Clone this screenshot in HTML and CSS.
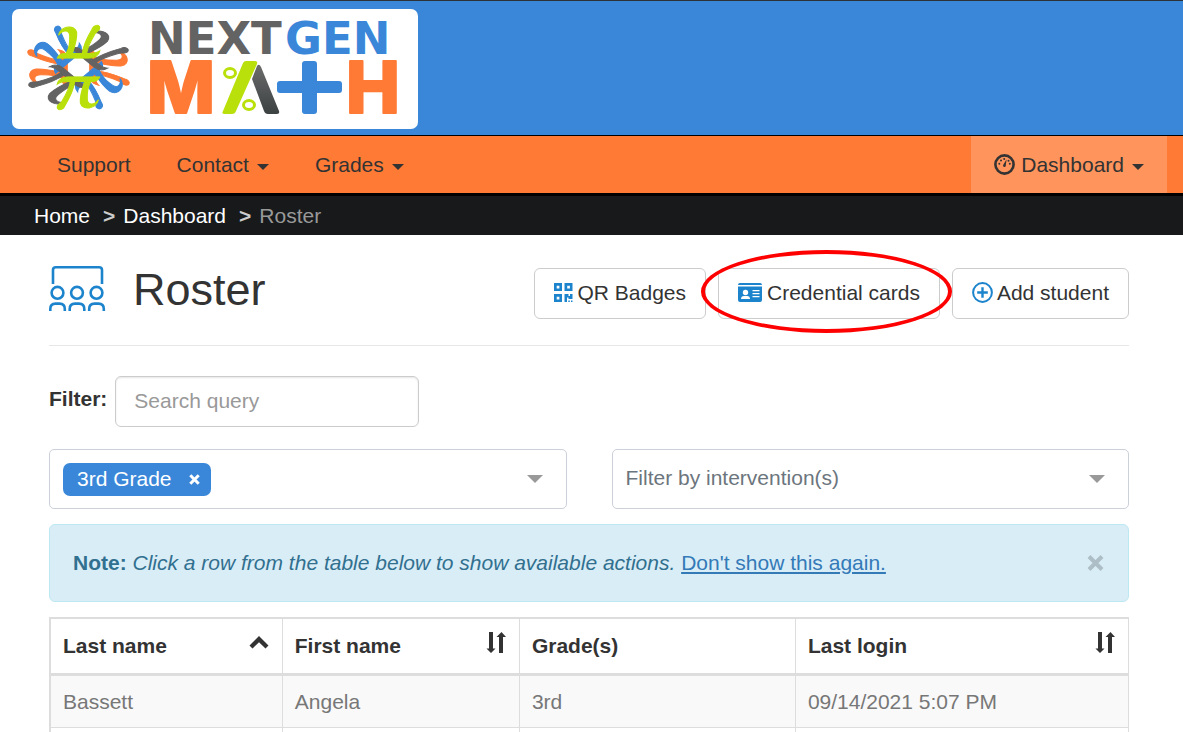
FILE: index.html
```html
<!DOCTYPE html>
<html lang="en">
<head>
	<meta charset="UTF-8">
	<title>Roster</title>
	<link rel="stylesheet" href="styles.css">
</head>
<body>
	<header class="header">
		<a href="#" class="logo">
			<svg width="406" height="120" viewBox="12 9 406 120" role="img" aria-label="NextGen Math">
				<defs>
					<g id="pi" fill="currentColor" stroke="currentColor" stroke-width="0.9">
						<path d="M-17 16C-16 11-12 9-8 9H17C16 12 14 13.5 11 13.5H-8C-12 13.5-15 14-17 16Z"/>
						<path d="M-6.5 13H-3C-4 23-8 31-11 37C-12 41-17 42-17 38C-17 35-14 35-13 32C-10 26-7 20-6.5 13Z"/>
						<path d="M5 13H10C7 20 7 24 7 30C7 36 12 37 16 31C14 40 3 42 1.5 34C1 28 3 20 5 13Z"/>
					</g>
				</defs>
				<g transform="translate(78.5 67.5) scale(1.25 1.04)">
					<use href="#pi" color="#ff7a35" transform="rotate(90)"/>
					<use href="#pi" color="#ff7a35" transform="rotate(-90)"/>
					<use href="#pi" color="#3a87d9" transform="rotate(135)"/>
					<use href="#pi" color="#3a87d9" transform="rotate(-45)"/>
					<use href="#pi" color="#636363" transform="rotate(45)"/>
					<use href="#pi" color="#636363" transform="rotate(225)"/>
					<use href="#pi" color="#b9e00b" transform="rotate(180)"/>
					<use href="#pi" color="#b9e00b"/>
				</g>
				<text class="logo-next" x="148" y="54">NEXT</text>
				<text class="logo-gen" x="285" y="54">GEN</text>
				<text class="logo-math" x="147" y="113">M</text>
				<defs>
					<linearGradient id="leg" x1="0" y1="0" x2="0" y2="1">
						<stop offset="0" stop-color="#6b6b6b"/>
						<stop offset="1" stop-color="#3c4142"/>
					</linearGradient>
				</defs>
				<path d="M252 79L257 66Q259 63 261 67L279 111Q280 114 277 114H268Q265 114 264 111Z" fill="url(#leg)"/>
				<path d="M246 61H255Q258 61 257 64L236 111Q235 114 232 114H225Q221 114 223 111L243 63Q244 61 246 61Z" fill="#b9e00b"/>
				<g fill="none" stroke="#b9e00b" stroke-width="3">
					<ellipse cx="230" cy="73" rx="5.5" ry="4.5"/>
					<ellipse cx="249" cy="105" rx="5.5" ry="4.5"/>
				</g>
				<path d="M305 61H314Q317 61 317 64V81H339Q342 81 342 84V90Q342 93 339 93H317V111Q317 114 314 114H305Q302 114 302 111V93H280Q277 93 277 90V84Q277 81 280 81H302V64Q302 61 305 61Z" fill="#3a87d9"/>
				<text class="logo-math" x="346" y="113">H</text>
			</svg>
		</a>
	</header>

	<nav class="navbar">
		<a href="#">Support</a>
		<a href="#">Contact <span class="caret"></span></a>
		<a href="#">Grades <span class="caret"></span></a>
		<a href="#" class="active">
			<svg class="icon-dash" width="21" height="21" viewBox="0 0 21 21">
				<circle cx="10.5" cy="10.5" r="9.1" fill="none" stroke="#333" stroke-width="2.6"/>
				<path d="M9.3 10.8L12.6 5.2L11.8 11.2A1.4 1.4 0 1 1 9.3 10.8Z"/>
				<circle cx="5.3" cy="9.8" r="1"/>
				<circle cx="7" cy="6.6" r="1"/>
				<circle cx="10.2" cy="5" r="1"/>
				<circle cx="14.5" cy="6.8" r="1"/>
				<circle cx="15.8" cy="9.8" r="1"/>
			</svg>
			Dashboard <span class="caret"></span>
		</a>
	</nav>

	<ol class="breadcrumb">
		<li><a href="#">Home</a></li>
		<li><a href="#">Dashboard</a></li>
		<li class="current">Roster</li>
	</ol>

	<main class="container">
		<div class="page-header">
			<svg width="57" height="46" viewBox="0 0 57 46" fill="none" stroke="#1c84cc" stroke-width="2.6">
				<path d="M4 18V4Q4 1.3 6.8 1.3H50Q53 1.3 53 4V18"/>
				<circle cx="8.5" cy="26.8" r="5.9"/>
				<circle cx="28" cy="26.8" r="5.9"/>
				<circle cx="47.5" cy="26.8" r="5.9"/>
				<path d="M1.3 45V43Q1.3 37.6 6.5 37.6H10.5Q15.8 37.6 15.8 43V45M20.7 45V43Q20.7 37.6 26 37.6H30Q35.3 37.6 35.3 43V45M40.2 45V43Q40.2 37.6 45.5 37.6H49.5Q54.8 37.6 54.8 43V45"/>
			</svg>
			<h1>Roster</h1>
			<div class="actions">
				<button type="button" class="btn">
					<svg width="19" height="20" viewBox="0 0 19 20" fill="#1c84cc">
						<path fill-rule="evenodd" d="M0 0H8V8H0ZM2.7 2.7V5.5H5.4V2.7ZM10.5 0H18.5V8H10.5ZM13.2 2.7V5.5H15.9V2.7ZM0 11H8V19H0ZM2.7 13.7V16.5H5.4V13.7Z"/>
						<path d="M10.5 11H14.5V13H16V11H18.5V16H14.5V14.5H13V19H10.5ZM14.3 17.5H15.8V19H14.3ZM17 17.5H18.5V19H17Z"/>
					</svg>
					QR Badges
				</button>
				<div class="marked">
					<button type="button" class="btn">
						<svg width="25" height="20" viewBox="0 0 25 20">
							<path fill="#1c84cc" d="M2 0H22Q24 0 24 2H0Q0 0 2 0ZM0 3.5H24V17Q24 19 22 19H2Q0 19 0 17Z"/>
							<g fill="#fff">
								<circle cx="7.5" cy="9.5" r="2.7"/>
								<path d="M3 16Q3 13 6 13H9Q12 13 12 16Z"/>
								<path d="M14.5 7H21.5V8.2H14.5ZM14.5 10H21.5V11.2H14.5ZM14.5 13H21.5V14.2H14.5Z"/>
							</g>
						</svg>
						Credential cards
					</button>
					<span class="ring"></span>
				</div>
				<button type="button" class="btn">
					<svg width="21" height="21" viewBox="0 0 21 21" fill="none" stroke="#1c84cc">
						<circle cx="10.5" cy="10.5" r="9.4" stroke-width="2"/>
						<path d="M10.5 5.2V15.8M5.2 10.5H15.8" stroke-width="2.4"/>
					</svg>
					Add student
				</button>
			</div>
		</div>

		<div class="search">
			<label for="query">Filter:</label>
			<input type="text" id="query" placeholder="Search query">
		</div>

		<div class="filters">
			<div class="select-box">
				<span class="tag">3rd Grade
					<button type="button" aria-label="Remove 3rd Grade">
						<svg width="11" height="11" viewBox="0 0 11 11" stroke="#fff" stroke-width="3"><path d="M1.3 1.3L9.7 9.7M9.7 1.3L1.3 9.7"/></svg>
					</button>
				</span>
				<button type="button" class="open" aria-label="Show grades"><span class="arrow"></span></button>
			</div>
			<div class="select-box">
				<select aria-label="Filter by intervention(s)">
					<option>Filter by intervention(s)</option>
				</select>
				<span class="arrow"></span>
			</div>
		</div>

		<div class="alert">
			<p><strong>Note:</strong> <em>Click a row from the table below to show available actions.</em> <a href="#">Don't show this again.</a></p>
			<button type="button" aria-label="Close">
				<svg width="17" height="16" viewBox="0 0 17 16" stroke="#adbec6" stroke-width="4"><path d="M2 1.5L15 14.5M15 1.5L2 14.5"/></svg>
			</button>
		</div>

		<table class="roster">
			<thead>
				<tr>
					<th class="col-last"><div>Last name
						<button type="button" aria-label="Sort by last name"><svg width="20" height="22" viewBox="0 0 20 22"><path d="M10 4L19.5 13.5L16.5 16.5L10 10.2L3.5 16.5L0.5 13.5Z"/></svg></button>
					</div></th>
					<th class="col-first"><div>First name
						<button type="button" aria-label="Sort by first name"><svg width="20" height="22" viewBox="0 0 20 22"><path d="M3 0H7V16.5H9.5L5 21L0.5 16.5H3ZM13 21V5H10.5L15.5 0L20 5H17V21Z"/></svg></button>
					</div></th>
					<th class="col-grade">Grade(s)</th>
					<th><div>Last login
						<button type="button" aria-label="Sort by last login"><svg width="20" height="22" viewBox="0 0 20 22"><path d="M3 0H7V16.5H9.5L5 21L0.5 16.5H3ZM13 21V5H10.5L15.5 0L20 5H17V21Z"/></svg></button>
					</div></th>
				</tr>
			</thead>
			<tbody>
				<tr>
					<td>Bassett</td>
					<td>Angela</td>
					<td>3rd</td>
					<td>09/14/2021 5:07 PM</td>
				</tr>
				<tr>
					<td></td>
					<td></td>
					<td></td>
					<td></td>
				</tr>
			</tbody>
		</table>
	</main>
</body>
</html>
```

FILE: styles.css
```css
*{
	box-sizing: border-box;
}
body{
	margin: 0;
	height: 100vh;
	overflow: hidden;
	font: 21px/30px "Liberation Sans", Arial, sans-serif;
	color: #333;
	background: #fff;
}
button, input, select{
	font: inherit;
	color: inherit;
}
button{
	padding: 0;
	border: 0;
	background: none;
	cursor: pointer;
}
svg{
	display: block;
	flex: none;
}

/* header */
.header{
	padding: 8px 12px 6px;
	border-top: 1px solid #2d3138;
	border-bottom: 1px solid #000;
	background: #3a87d9;
}
.logo{
	display: block;
	width: 406px;
	border-radius: 7px;
	background: #fff;
}
.logo-next, .logo-gen{
	font: bold 45px "DejaVu Sans", sans-serif;
	fill: #636363;
}
.logo-gen{
	fill: #3a87d9;
}
.logo-math{
	font: 800 72px Inter, sans-serif;
	fill: #ff7a35;
	stroke: #ff7a35;
	stroke-width: 2px;
	stroke-linejoin: round;
}

/* nav */
.navbar{
	display: flex;
	padding: 0 16px 0 34px;
	border-bottom: 3px solid #000;
	background: #ff7a35;
}
.navbar a{
	display: flex;
	align-items: center;
	height: 57px;
	padding: 0 23px;
	color: #333;
	text-decoration: none;
}
.navbar .active{
	margin-left: auto;
	background: #ff945c;
}
.icon-dash{
	margin-right: 6px;
	fill: #333;
}
.caret{
	margin: 4px 0 0 8px;
	border: 6px solid transparent;
	border-top-color: #333;
	border-bottom: 0;
}

/* breadcrumb */
.breadcrumb{
	display: flex;
	margin: 0;
	padding: 5px 34px 4px;
	list-style: none;
	background: #17191b;
}
.breadcrumb a{
	color: #fff;
	text-decoration: none;
}
.breadcrumb li + li:before{
	content: ">";
	padding: 0 8px 0 13px;
	font-weight: bold;
	color: #ccc;
}
.breadcrumb .current{
	color: #999;
}

/* page title */
.container{
	padding: 31px 54px 0 49px;
}
.page-header{
	display: flex;
	align-items: flex-start;
	padding-bottom: 26px;
	border-bottom: 1px solid #e7e7e7;
}
h1{
	margin: 0 0 0 27px;
	font-size: 45px;
	line-height: 48px;
	font-weight: normal;
}
.actions{
	display: flex;
	gap: 12px;
	margin: 2px 0 0 auto;
}
.btn{
	display: flex;
	align-items: center;
	gap: 4px;
	height: 51px;
	padding: 0 19px 2px;
	border: 1px solid #ccc;
	border-radius: 6px;
	background: #fff;
	white-space: nowrap;
}
.marked{
	position: relative;
}
.ring{
	position: absolute;
	top: -18px;
	right: -12px;
	bottom: -14px;
	left: -17px;
	border: 4px solid #f00;
	border-radius: 50%;
	pointer-events: none;
}

/* filters */
.search{
	display: flex;
	align-items: center;
	gap: 8px;
	margin-top: 30px;
}
.search label{
	padding-bottom: 6px;
	font-weight: bold;
}
.search input{
	width: 304px;
	height: 51px;
	padding: 0 18px 2px;
	border: 1px solid #ccc;
	border-radius: 6px;
	box-shadow: inset 0 1px 2px rgba(0,0,0,.1);
}
.search input::placeholder{
	color: #999;
}
.filters{
	display: grid;
	grid-template-columns: 1fr 1fr;
	gap: 45px;
	margin-top: 22px;
}
.select-box{
	display: flex;
	align-items: center;
	height: 60px;
	padding: 0 23px 0 13px;
	border: 1px solid #ccd0d9;
	border-radius: 5px;
}
.select-box select{
	flex: 1;
	height: 56px;
	padding: 0 0 2px;
	border: 0;
	background: none;
	appearance: none;
	color: #6c757d;
}
.tag{
	display: flex;
	align-items: center;
	gap: 17px;
	height: 33px;
	padding: 0 11px 0 14px;
	border-radius: 7px;
	color: #fff;
	background: #3a87d9;
}
.open{
	margin-left: auto;
}
.arrow{
	display: block;
	border: 8px solid transparent;
	border-top-color: #999;
	border-bottom: 0;
}

/* note */
.alert{
	display: flex;
	align-items: center;
	justify-content: space-between;
	height: 78px;
	margin-top: 15px;
	padding: 0 24px 0 23px;
	border: 1px solid #bce8f1;
	border-radius: 6px;
	color: #31708f;
	background: #d9edf7;
}
.alert p{
	margin: 0;
}
.alert a{
	color: #337ab7;
}

/* table */
.roster{
	width: 100%;
	margin-top: 15px;
	border: solid #ddd;
	border-width: 2px 0 0 2px;
	border-spacing: 0;
	table-layout: fixed;
}
.roster th, .roster td{
	padding: 0 12px;
	height: 52px;
	border: solid #ddd;
	border-width: 0 1px 1px 0;
	text-align: left;
}
.roster th{
	height: 57px;
	border-bottom-width: 3px;
}
.roster th div{
	display: flex;
	justify-content: space-between;
}
.roster th button{
	padding: 0 1px 6px 0;
}
.roster th svg{
	fill: #333;
}
.roster td{
	color: #777;
}
.roster tbody tr:nth-child(odd){
	background: #f9f9f9;
}
.col-last{
	width: 21.5%;
}
.col-first{
	width: 22%;
}
.col-grade{
	width: 25.6%;
}
```
